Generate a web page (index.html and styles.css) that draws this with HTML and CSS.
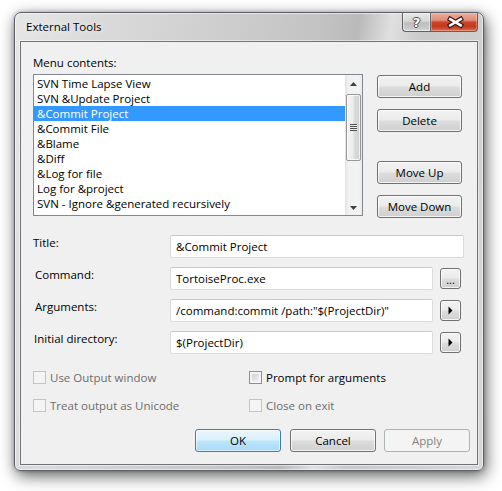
FILE: index.html
```html
<!DOCTYPE html>
<html>
<head>
<meta charset="utf-8">
<title>External Tools</title>
<link rel="stylesheet" href="styles.css">
</head>
<body>
<div class="window">
  <div class="titlebar">
    <span class="title">External Tools</span>
    <div class="caption-buttons">
      <div class="cap help"><span class="q">?</span></div>
      <div class="cap close">
        <svg width="48" height="19" viewBox="0 0 48 19">
          <path d="M20 6 L31 12.5 M31 6 L20 12.5" stroke="#3d1b14" stroke-width="5" stroke-linecap="square" fill="none"/>
          <path d="M20 6 L31 12.5 M31 6 L20 12.5" stroke="#ffffff" stroke-width="2.6" stroke-linecap="square" fill="none"/>
        </svg>
      </div>
    </div>
  </div>
  <div class="client">
    <div class="menu-label">Menu contents:</div>
    <div class="menu-row">
      <div class="listbox">
        <ul class="items">
          <li>SVN Time Lapse View</li>
          <li>SVN &amp;Update Project</li>
          <li class="sel">&amp;Commit Project</li>
          <li>&amp;Commit File</li>
          <li>&amp;Blame</li>
          <li>&amp;Diff</li>
          <li>&amp;Log for file</li>
          <li>Log for &amp;project</li>
          <li>SVN - Ignore &amp;generated recursively</li>
          <li>SVN - &amp;Properties</li>
        </ul>
        <div class="scrollbar">
          <div class="sb-arrow">
            <svg width="7" height="4" viewBox="0 0 7 4"><polygon points="0,4 3.5,0 7,4" fill="#404040"/></svg>
          </div>
          <div class="sb-thumb">
            <div class="grip"></div>
          </div>
          <div class="sb-space"></div>
          <div class="sb-arrow down">
            <svg width="7" height="4" viewBox="0 0 7 4"><polygon points="0,0 7,0 3.5,4" fill="#404040"/></svg>
          </div>
        </div>
      </div>
      <div class="side-buttons">
        <button class="btn side">Add</button>
        <button class="btn side">Delete</button>
        <button class="btn side gap">Move Up</button>
        <button class="btn side">Move Down</button>
      </div>
    </div>

    <div class="form">
      <div class="field">
        <label class="lbl first">Title:</label>
        <div class="input wide">&amp;Commit Project</div>
      </div>
      <div class="field">
        <label class="lbl">Command:</label>
        <div class="input">TortoiseProc.exe</div>
        <button class="btn small dots">...</button>
      </div>
      <div class="field">
        <label class="lbl">Arguments:</label>
        <div class="input">/command:commit /path:"$(ProjectDir)"</div>
        <button class="btn small">
          <svg width="19" height="19" viewBox="0 0 19 19"><polygon points="7.5,5.5 11.5,9.5 7.5,13.5" fill="#000"/></svg>
        </button>
      </div>
      <div class="field">
        <label class="lbl mid">Initial directory:</label>
        <div class="input">$(ProjectDir)</div>
        <button class="btn small">
          <svg width="19" height="19" viewBox="0 0 19 19"><polygon points="7.5,5.5 11.5,9.5 7.5,13.5" fill="#000"/></svg>
        </button>
      </div>
    </div>

    <div class="checks">
      <div class="check disabled"><span class="cb"></span><span>Use Output window</span></div>
      <div class="check"><span class="cb"></span><span>Prompt for arguments</span></div>
      <div class="check disabled"><span class="cb"></span><span>Treat output as Unicode</span></div>
      <div class="check disabled"><span class="cb"></span><span>Close on exit</span></div>
    </div>

    <div class="actions">
      <button class="btn action default">OK</button>
      <button class="btn action">Cancel</button>
      <button class="btn action disabled">Apply</button>
    </div>
  </div>
</div>
</body>
</html>
```

FILE: styles.css
```css
* { box-sizing: border-box; }

html, body {
  margin: 0;
  padding: 0;
}

body {
  width: 502px;
  height: 491px;
  overflow: hidden;
  background: #ffffff;
  font-family: "Open Sans", "Noto Sans", sans-serif;
  font-size: 11.5px;
  line-height: 15px;
  color: #000;
}

.window {
  margin: 12px 0 0 14px;
  width: 470px;
  height: 459px;
  border: 1px solid #5c6066;
  border-radius: 7px 7px 6px 6px;
  background: linear-gradient(100deg, #e6e6e6 0%, #dadada 16%, #cecece 38%, #c3c3c3 56%, #bababa 63%, #e0e0e0 69%, #c9c9c9 75%, #cfcfcf 86%, #d7d7d7 100%);
  box-shadow: inset 0 0 0 1px rgba(255,255,255,0.55), 2px 5px 16px rgba(0,0,0,0.62), 0 0 4px rgba(0,0,0,0.25);
  padding: 0 5px 5px 5px;
  display: flex;
  flex-direction: column;
}

.titlebar {
  height: 28px;
  display: flex;
  align-items: flex-start;
}

.title {
  padding: 6px 0 0 6px;
  color: #000;
  text-shadow: 0 0 6px rgba(255,255,255,0.9);
}

.caption-buttons {
  margin-left: auto;
  display: flex;
  height: 19px;
}

.cap {
  height: 19px;
  border: 1px solid #5e6268;
  border-top: none;
  display: flex;
  align-items: center;
  justify-content: center;
}

.help {
  width: 28px;
  border-radius: 0 0 0 4px;
  border-right: none;
  background: linear-gradient(#e8e8e8 0%, #d6d6d6 45%, #bdbdbd 55%, #c9c9c9 85%, #dcdcdc 100%);
  box-shadow: inset 0 0 0 1px rgba(255,255,255,0.45);
}

.help .q {
  font-family: "DejaVu Sans", sans-serif;
  font-weight: bold;
  font-size: 13px;
  line-height: 17px;
  color: #fff;
  text-shadow: 1px 0 #4a4a4a, -1px 0 #4a4a4a, 0 1px #4a4a4a, 0 -1px #4a4a4a;
}

.close {
  width: 48px;
  border-radius: 0 0 4px 0;
  background: linear-gradient(#eab0a2 0%, #e08a76 40%, #c9442b 52%, #c4381f 75%, #de6e52 100%);
  box-shadow: inset 0 0 0 1px rgba(255,220,210,0.35);
}

.close svg { display: block; }

.client {
  flex: 1;
  background: #f0f0f0;
  border: 1px solid #6f7277;
  box-shadow: 0 0 0 1px rgba(255,255,255,0.5);
  padding: 13px 0 0 12px;
  display: flex;
  flex-direction: column;
}

.menu-label {
  height: 15px;
}

.menu-row {
  margin-top: 4px;
  display: flex;
  align-items: flex-start;
}

.listbox {
  width: 330px;
  height: 142px;
  border: 1px solid #828790;
  background: #fff;
  display: flex;
  overflow: hidden;
}

.items {
  width: 311px;
  list-style: none;
  margin: 0;
  padding: 1px 0 0 0;
  overflow: hidden;
}

.items li {
  height: 15px;
  padding-left: 3px;
  white-space: nowrap;
}

.items li.sel {
  background: #3399ff;
  color: #fff;
}

.scrollbar {
  width: 17px;
  height: 100%;
  display: flex;
  flex-direction: column;
  background: linear-gradient(90deg, #e3e3e3 0%, #f1f1f1 20%, #f3f3f3 80%, #e9e9e9 100%);
}

.sb-arrow {
  height: 17px;
  display: flex;
  align-items: center;
  justify-content: center;
}

.sb-arrow svg { display: block; }

.sb-arrow.down { align-items: flex-end; padding-bottom: 5px; }

.sb-thumb {
  margin: 2px 1px 0 1px;
  height: 67px;
  border: 1px solid #979797;
  border-radius: 2px;
  background: linear-gradient(90deg, #f5f5f5 0%, #ececec 45%, #dcdcdc 55%, #d0d0d0 100%);
  box-shadow: inset 0 0 0 1px rgba(255,255,255,0.7);
  display: flex;
  align-items: center;
  justify-content: center;
}

.grip {
  width: 7px;
  height: 7px;
  background: repeating-linear-gradient(#4e4e4e 0px, #4e4e4e 1px, #eeeeee 1px, #eeeeee 2px);
}

.sb-space { flex: 1; }

.side-buttons {
  margin-left: 14px;
  margin-top: 1px;
  display: flex;
  flex-direction: column;
  gap: 11px;
}

.btn {
  height: 23px;
  padding: 0;
  border: 1px solid #707070;
  border-radius: 3px;
  background: linear-gradient(#f2f2f2 0%, #ebebeb 48%, #dddddd 52%, #cfcfcf 100%);
  box-shadow: inset 0 0 0 1px rgba(255,255,255,0.75);
  font-family: inherit;
  font-size: inherit;
  line-height: 15px;
  color: #000;
  display: flex;
  align-items: center;
  justify-content: center;
}

.side { width: 85px; }

.side.gap { margin-top: 18px; }

.form {
  margin-top: 17px;
  display: flex;
  flex-direction: column;
  gap: 9px;
}

.field {
  height: 23px;
  display: flex;
  align-items: flex-start;
}

.lbl {
  width: 137px;
  padding-left: 2px;
}

.lbl.first { padding-left: 0; }
.lbl.mid { padding-left: 1px; }

.input {
  width: 263px;
  height: 23px;
  background: #fff;
  border: 1px solid #dbdbdb;
  border-top-color: #c9c9c9;
  border-radius: 2px;
  padding: 0 5px 1px 5px;
  display: flex;
  align-items: center;
  white-space: nowrap;
}

.input.wide { width: 294px; }

.small {
  width: 21px;
  height: 21px;
  margin: 1px 0 0 7px;
}

.small svg { display: block; }

.dots {
  align-items: flex-start;
  padding-top: 3px;
  font-size: 11px;
}

.checks {
  margin-top: 16px;
  display: grid;
  grid-template-columns: 216px auto;
  row-gap: 13px;
}

.check {
  display: flex;
  align-items: flex-start;
  height: 15px;
}

.cb {
  width: 13px;
  height: 13px;
  margin: 1px 4px 0 0;
  border: 1px solid #8e8f8f;
  background: linear-gradient(135deg, #c5c9cf 0%, #e4e6e9 60%, #f7f7f7 100%);
  box-shadow: inset 0 0 0 2px #f4f4f4;
}

.check.disabled { color: #6d6d6d; }

.check.disabled .cb {
  border-color: #c3c3c3;
  background: #f4f4f4;
  box-shadow: none;
}

.actions {
  margin-top: 16px;
  display: flex;
  justify-content: flex-end;
  padding-right: 7px;
  gap: 8px;
}

.action { width: 86px; }

.action.default {
  margin-right: 1px;
  border-color: #3c7fb1;
  background: linear-gradient(#eaf6fd 0%, #d9f0fc 48%, #bee6fd 52%, #a7d9f5 100%);
  box-shadow: inset 0 0 0 1px rgba(255,255,255,0.6);
}

.action.disabled {
  border-color: #adb2b5;
  background: #f4f4f4;
  box-shadow: none;
  color: #838383;
}
```
